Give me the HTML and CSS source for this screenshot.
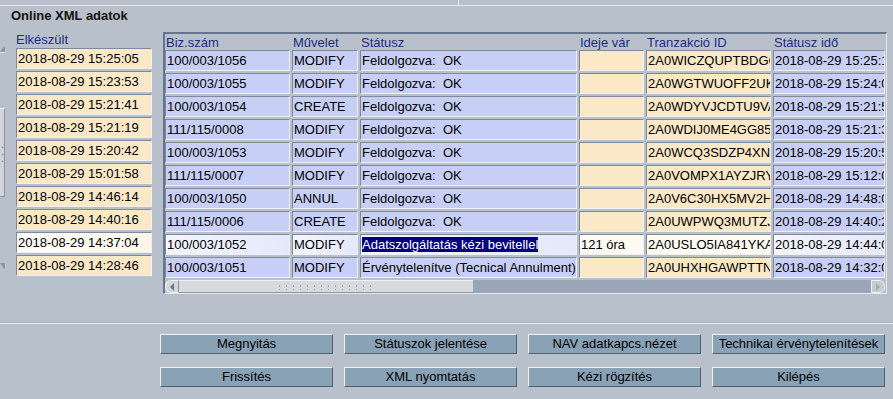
FILE: index.html
```html
<!DOCTYPE html>
<html lang="hu">
<head>
<meta charset="utf-8">
<title>Online XML adatok</title>
<link rel="stylesheet" href="styles.css">
</head>
<body>
<div class="topstrip"><div class="topdiv"></div></div>
<div class="title">Online XML adatok</div>
<div class="main">
  <div class="vscroll">
    <div class="vs-up"><svg width="9" height="8" viewBox="0 0 9 8"><path d="M0 7 L4 1 L8 7 Z" fill="#8d97a3"/><path d="M0 7.5 H8" stroke="#e6eaee" stroke-width="1"/></svg></div>
    <div class="vs-thumb"><span class="vs-grip"></span></div>
    <div class="vs-down"><svg width="9" height="8" viewBox="0 0 9 8"><path d="M0 1 L4 7 L8 1 Z" fill="#8d97a3"/></svg></div>
  </div>
  <div class="leftcol">
    <div class="lhead">Elkészült</div>
    <div class="lfields">
      <div class="field">2018-08-29 15:25:05</div>
      <div class="field">2018-08-29 15:23:53</div>
      <div class="field">2018-08-29 15:21:41</div>
      <div class="field">2018-08-29 15:21:19</div>
      <div class="field">2018-08-29 15:20:42</div>
      <div class="field">2018-08-29 15:01:58</div>
      <div class="field">2018-08-29 14:46:14</div>
      <div class="field">2018-08-29 14:40:16</div>
      <div class="field field-sel">2018-08-29 14:37:04</div>
      <div class="field">2018-08-29 14:28:46</div>
    </div>
  </div>
  <div class="gridpanel">
    <div class="ghead">
      <div>Biz.szám</div><div>Művelet</div><div>Státusz</div><div>Ideje vár</div><div>Tranzakció ID</div><div>Státusz idő</div>
    </div>
    <div class="rows">
      <div class="row"><div class="c b">100/003/1056</div><div class="c b">MODIFY</div><div class="c b">Feldolgozva:  OK</div><div class="c y"></div><div class="c y">2A0WICZQUPTBDGC7K</div><div class="c b">2018-08-29 15:25:12</div></div>
      <div class="row"><div class="c b">100/003/1055</div><div class="c b">MODIFY</div><div class="c b">Feldolgozva:  OK</div><div class="c y"></div><div class="c y">2A0WGTWUOFF2UKM3</div><div class="c b">2018-08-29 15:24:03</div></div>
      <div class="row"><div class="c b">100/003/1054</div><div class="c b">CREATE</div><div class="c b">Feldolgozva:  OK</div><div class="c y"></div><div class="c y">2A0WDYVJCDTU9VA4</div><div class="c b">2018-08-29 15:21:52</div></div>
      <div class="row"><div class="c b">111/115/0008</div><div class="c b">MODIFY</div><div class="c b">Feldolgozva:  OK</div><div class="c y"></div><div class="c y">2A0WDIJ0ME4GG85Q</div><div class="c b">2018-08-29 15:21:31</div></div>
      <div class="row"><div class="c b">100/003/1053</div><div class="c b">MODIFY</div><div class="c b">Feldolgozva:  OK</div><div class="c y"></div><div class="c y">2A0WCQ3SDZP4XN2R</div><div class="c b">2018-08-29 15:20:53</div></div>
      <div class="row"><div class="c b">111/115/0007</div><div class="c b">MODIFY</div><div class="c b">Feldolgozva:  OK</div><div class="c y"></div><div class="c y">2A0VOMPX1AYZJRY5</div><div class="c b">2018-08-29 15:12:07</div></div>
      <div class="row"><div class="c b">100/003/1050</div><div class="c b">ANNUL</div><div class="c b">Feldolgozva:  OK</div><div class="c y"></div><div class="c y">2A0V6C30HX5MV2HK</div><div class="c b">2018-08-29 14:48:04</div></div>
      <div class="row"><div class="c b">111/115/0006</div><div class="c b">CREATE</div><div class="c b">Feldolgozva:  OK</div><div class="c y"></div><div class="c y">2A0UWPWQ3MUTZJ8</div><div class="c b">2018-08-29 14:40:25</div></div>
      <div class="row row-sel"><div class="c b">100/003/1052</div><div class="c b">MODIFY</div><div class="c b"><span class="hl">Adatszolgáltatás kézi bevitellel</span></div><div class="c y">121 óra</div><div class="c y">2A0USLO5IA841YKA</div><div class="c b">2018-08-29 14:44:06</div></div>
      <div class="row"><div class="c b">100/003/1051</div><div class="c b">MODIFY</div><div class="c b">Érvénytelenítve (Tecnical Annulment)</div><div class="c y"></div><div class="c y">2A0UHXHGAWPTTN6</div><div class="c b">2018-08-29 14:32:01</div></div>
    </div>
    <div class="hscroll">
      <div class="hs-left"><svg width="6" height="8" viewBox="0 0 6 8"><path d="M5 0 L1 4 L5 8 Z" fill="#6d7782"/></svg></div>
      <div class="hs-thumb"><span class="hs-grip"></span></div>
      <div class="hs-track"></div>
      <div class="hs-right"><svg width="6" height="8" viewBox="0 0 6 8"><path d="M1 0 L5 4 L1 8 Z" fill="#a3abb5"/></svg></div>
    </div>
  </div>
</div>
<div class="sep"></div>
<div class="buttons">
  <div class="btn">Megnyitás</div>
  <div class="btn">Státuszok jelentése</div>
  <div class="btn">NAV adatkapcs.nézet</div>
  <div class="btn">Technikai érvénytelenítések</div>
  <div class="btn">Frissítés</div>
  <div class="btn">XML nyomtatás</div>
  <div class="btn">Kézi rögzítés</div>
  <div class="btn">Kilépés</div>
</div>
</body>
</html>
```
FILE: styles.css
```css
* { box-sizing: border-box; }
html, body { margin: 0; padding: 0; }
body {
  width: 893px;
  height: 399px;
  overflow: hidden;
  background: #b8c1cb;
  font-family: "Liberation Sans", Arial, sans-serif;
  font-size: 13px;
  color: #000;
}
.topstrip {
  height: 6px;
  border-bottom: 1px solid #e6eaee;
}
.topdiv {
  margin-left: 458px;
  width: 1px;
  height: 5px;
  background: #e6eaee;
}
.title {
  margin-top: 2px;
  margin-left: 11px;
  font-weight: bold;
  line-height: 15px;
  height: 15px;
  color: #111;
}
.main {
  margin-top: 9px;
  display: flex;
  align-items: flex-start;
}
.vscroll {
  width: 5px;
  display: flex;
  flex-direction: column;
}
.vs-up { margin-top: 13px; height: 9px; overflow: hidden; }
.vs-up svg, .vs-down svg { display: block; }
.vs-thumb {
  margin-top: 54px;
  height: 89px;
  background: #cfd5db;
  border-right: 1px solid #8a949e;
  border-top: 1px solid #eef1f4;
  border-bottom: 1px solid #8a949e;
  display: flex;
  align-items: center;
}
.vs-grip {
  width: 3px;
  height: 18px;
  margin-left: 1px;
  background-image: radial-gradient(circle, #8c95a0 0.8px, transparent 1.1px);
  background-size: 3px 7px;
}
.vs-down { margin-top: 65px; height: 9px; overflow: hidden; }
.leftcol {
  margin-left: 11px;
  width: 136px;
}
.lhead {
  height: 16px;
  line-height: 15px;
  color: #1d2c86;
}
.lfields {
  display: flex;
  flex-direction: column;
  gap: 2px;
}
.field, .c {
  height: 21px;
  line-height: 19px;
  border: 1px solid;
  border-color: #7f8998 #eef0f4 #eef0f4 #7f8998;
  padding: 0 1px;
  white-space: pre;
  overflow: hidden;
}
.field { background: #fbe8c6; }
.field-sel { background: linear-gradient(to right, #fffefa, #fdf6e8); }
.gridpanel {
  margin-left: 11px;
  width: 724px;
  border-style: solid;
  border-width: 2px 1px 1px 2px;
  border-color: #66768c #e4e8ec #e4e8ec #66768c;
}
.ghead, .row {
  display: grid;
  grid-template-columns: 125px 66px 217px 65px 125px 112px;
  column-gap: 2px;
}
.ghead {
  height: 16px;
  padding-top: 1px;
  line-height: 15px;
  color: #1d2c86;
}
.ghead div { padding-left: 1px; white-space: nowrap; overflow: hidden; }
.rows {
  display: flex;
  flex-direction: column;
  gap: 2px;
}
.c.b { background: #c7cff6; }
.c.y { background: #fbe8c6; }
.row-sel .c.b { background: linear-gradient(to right, #f4f5fd, #e4e8fb); }
.row-sel .c.y { background: #fffbf3; }
.hl { background: #00007f; color: #fff; }
.hscroll {
  margin-top: 2px;
  height: 13px;
  width: 720px;
  display: flex;
}
.hs-left, .hs-right {
  width: 14px;
  display: flex;
  align-items: center;
  justify-content: center;
  background: #d3d8dd;
  border: 1px solid #eef1f4;
}
.hs-left { border-radius: 6px 0 0 6px; border-right-color: #8a949e; }
.hs-right { border-radius: 0 6px 6px 0; background: #c6ccd3; margin-left: auto; }
.hs-thumb {
  width: 294px;
  background: #d7dbe0;
  border-top: 1px solid #eef1f4;
  border-bottom: 1px solid #8e98a4;
  display: flex;
  align-items: center;
  justify-content: center;
}
.hs-grip {
  width: 100px;
  height: 6px;
  background-image: radial-gradient(circle, #9aa2ac 0.8px, transparent 1.1px);
  background-size: 7px 4px;
}
.hs-track {
  flex: 1;
  background: #98a6b7;
}
.sep {
  margin-top: 28px;
  height: 2px;
  border-top: 1px solid #a9b2bc;
  border-bottom: 1px solid #eceff2;
}
.buttons {
  margin-top: 10px;
  margin-left: 160px;
  display: grid;
  grid-template-columns: repeat(4, 173px);
  column-gap: 11px;
  row-gap: 13px;
}
.btn {
  height: 20px;
  line-height: 18px;
  text-align: center;
  background: #89a2b6;
  border: 1px solid;
  border-color: #eef2f5 #4f5f6e #4f5f6e #eef2f5;
  white-space: nowrap;
}
```
